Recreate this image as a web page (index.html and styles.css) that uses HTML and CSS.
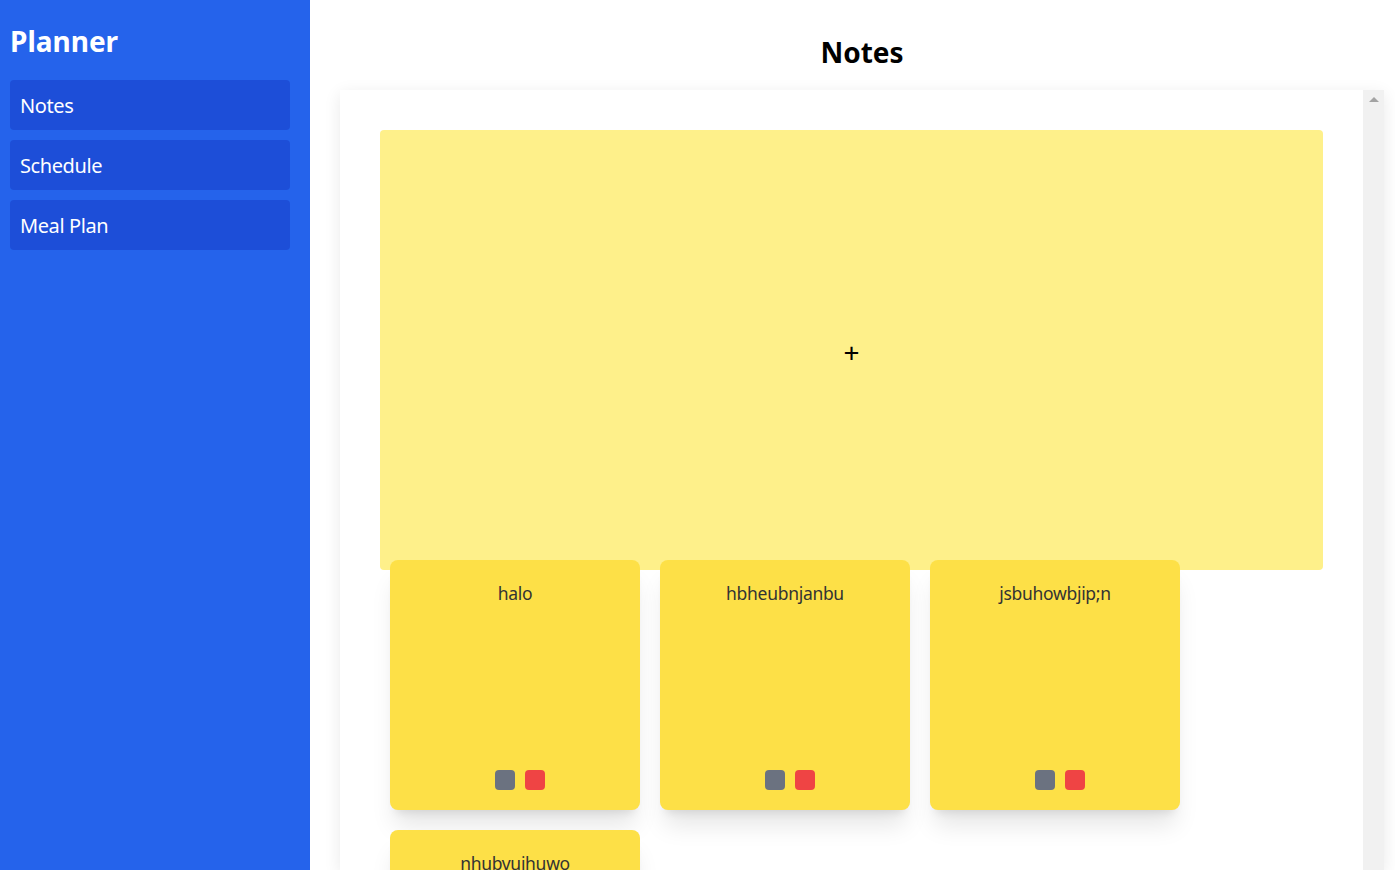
FILE: index.html
```html
<!DOCTYPE html>
<html>
<head>
<meta charset="utf-8">
<title>Planner</title>
<link rel="stylesheet" href="styles.css">
</head>
<body>
<div class="app">
  <aside class="sidebar">
    <h2 class="brand">Planner</h2>
    <nav class="nav">
      <a class="nav-item">Notes</a>
      <a class="nav-item">Schedule</a>
      <a class="nav-item">Meal Plan</a>
    </nav>
  </aside>
  <main class="main">
    <h1 class="page-title">Notes</h1>
    <section class="panel">
      <div class="panel-content">
        <div class="add-note">+</div>
        <div class="notes">
          <div class="note">
            <p class="note-text">halo</p>
            <div class="note-actions"><span class="btn btn-gray"></span><span class="btn btn-red"></span></div>
          </div>
          <div class="note">
            <p class="note-text">hbheubnjanbu</p>
            <div class="note-actions"><span class="btn btn-gray"></span><span class="btn btn-red"></span></div>
          </div>
          <div class="note">
            <p class="note-text">jsbuhowbjip;n</p>
            <div class="note-actions"><span class="btn btn-gray"></span><span class="btn btn-red"></span></div>
          </div>
          <div class="note">
            <p class="note-text">nhubvuihuwo</p>
            <div class="note-actions"><span class="btn btn-gray"></span><span class="btn btn-red"></span></div>
          </div>
        </div>
      </div>
      <div class="scrollbar"><span class="scroll-up"></span></div>
    </section>
  </main>
</div>
</body>
</html>
```
FILE: styles.css
```css
* { box-sizing: border-box; }
html, body { margin: 0; padding: 0; height: 100%; overflow: hidden; }
body {
  font-family: "Noto Sans", "Open Sans", sans-serif;
  background: #ffffff;
  color: #000;
}
.app { display: flex; height: 870px; }
.sidebar {
  width: 310px;
  flex: 0 0 310px;
  background: #2563eb;
  padding: 0 20px 0 10px;
}
.brand {
  margin: 0;
  padding-top: 22px;
  height: 80px;
  font-size: 28px;
  font-weight: 700;
  line-height: 38px;
  color: #fff;
}
.nav { display: flex; flex-direction: column; gap: 10px; }
.nav-item {
  display: flex;
  align-items: center;
  height: 50px;
  padding-left: 10px;
  background: #1d4ed8;
  border-radius: 4px;
  color: #fff;
  font-size: 20px;
  letter-spacing: -0.4px;
}
.main {
  flex: 1;
  display: flex;
  flex-direction: column;
  padding: 0 11px 0 30px;
  min-width: 0;
}
.page-title {
  margin: 0 0 19px;
  padding-top: 33px;
  font-size: 28px;
  line-height: 38px;
  font-weight: 700;
  text-align: center;
}
.panel {
  flex: 1;
  display: flex;
  background: #fff;
  box-shadow: 0 4px 16px rgba(0,0,0,0.09);
  min-height: 0;
  overflow: hidden;
}
.panel-content {
  flex: 1;
  padding: 40px 40px 0;
  overflow: hidden;
}
.add-note {
  height: 440px;
  background: #fef08a;
  border-radius: 4px;
  display: flex;
  align-items: center;
  justify-content: center;
  font-size: 28px;
  line-height: 1;
  padding-top: 4px;
  color: #000;
}
.notes {
  display: flex;
  flex-wrap: wrap;
  margin-top: -20px;
  width: 810px;
}
.note {
  width: 250px;
  height: 250px;
  margin: 10px;
  background: #fde047;
  border-radius: 8px;
  box-shadow: 0 20px 25px -5px rgba(0,0,0,0.1), 0 8px 10px -6px rgba(0,0,0,0.1);
  display: flex;
  flex-direction: column;
  align-items: center;
  justify-content: space-between;
  padding: 20px;
}
.note-text {
  margin: 0;
  font-size: 17.5px;
  line-height: 27px;
  letter-spacing: -0.3px;
  color: #333;
}
.note-actions { display: flex; }
.btn { width: 20px; height: 20px; border-radius: 4px; display: block; margin-left: 10px; }
.btn-gray { background: #6b7280; }
.btn-red { background: #ef4444; }
.scrollbar {
  width: 21px;
  flex: 0 0 21px;
  background: #f1f1f1;
  display: flex;
  justify-content: center;
  padding-top: 7px;
}
.scroll-up {
  width: 0; height: 0;
  border-left: 5px solid transparent;
  border-right: 5px solid transparent;
  border-bottom: 5px solid #a3a3a3;
}
```
